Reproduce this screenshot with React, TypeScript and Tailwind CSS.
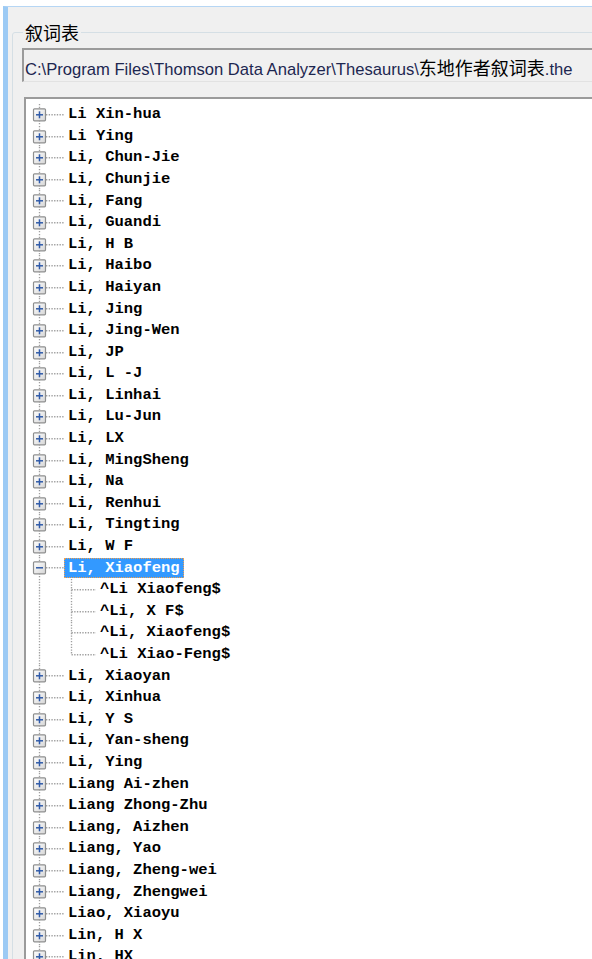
import React from "react";

type Node = { label: string; children?: string[]; selected?: boolean };

const ITEMS: Node[] = [
  { label: "Li Xin-hua" },
  { label: "Li Ying" },
  { label: "Li, Chun-Jie" },
  { label: "Li, Chunjie" },
  { label: "Li, Fang" },
  { label: "Li, Guandi" },
  { label: "Li, H B" },
  { label: "Li, Haibo" },
  { label: "Li, Haiyan" },
  { label: "Li, Jing" },
  { label: "Li, Jing-Wen" },
  { label: "Li, JP" },
  { label: "Li, L -J" },
  { label: "Li, Linhai" },
  { label: "Li, Lu-Jun" },
  { label: "Li, LX" },
  { label: "Li, MingSheng" },
  { label: "Li, Na" },
  { label: "Li, Renhui" },
  { label: "Li, Tingting" },
  { label: "Li, W F" },
  {
    label: "Li, Xiaofeng",
    selected: true,
    children: ["^Li Xiaofeng$", "^Li, X F$", "^Li, Xiaofeng$", "^Li Xiao-Feng$"],
  },
  { label: "Li, Xiaoyan" },
  { label: "Li, Xinhua" },
  { label: "Li, Y S" },
  { label: "Li, Yan-sheng" },
  { label: "Li, Ying" },
  { label: "Liang Ai-zhen" },
  { label: "Liang Zhong-Zhu" },
  { label: "Liang, Aizhen" },
  { label: "Liang, Yao" },
  { label: "Liang, Zheng-wei" },
  { label: "Liang, Zhengwei" },
  { label: "Liao, Xiaoyu" },
  { label: "Lin, H X" },
  { label: "Lin, HX" },
  { label: "Lin, Jian" },
];

const ROW_H = 21.6;
const MID = ROW_H / 2;
const DOTS = "1.35 1.35";
const LINE = "#a0a0a0";

// Expander cell: dotted tree lines plus the +/- box
function Expander({ open, hasBox, last }: { open?: boolean; hasBox: boolean; last?: boolean }) {
  return (
    <svg width={38} height={ROW_H} viewBox={`0 0 38 ${ROW_H}`} className="shrink-0">
      <defs>
        <linearGradient id="boxfill" x1="0" y1="0" x2="1" y2="1">
          <stop offset="0" stopColor="#ffffff" />
          <stop offset="1" stopColor="#d6d6d6" />
        </linearGradient>
      </defs>
      <line x1={13.5} y1={0} x2={13.5} y2={last ? MID : ROW_H} stroke={LINE} strokeWidth={1.35} strokeDasharray={DOTS} />
      <line x1={hasBox ? 20 : 13.5} y1={MID} x2={38} y2={MID} stroke={LINE} strokeWidth={1.35} strokeDasharray={DOTS} />
      {hasBox && (
        <g>
          <rect x={7.5} y={MID - 6} width={12} height={12} rx={1} fill="url(#boxfill)" stroke="#8e8f8f" strokeWidth={1.2} />
          <line x1={10} y1={MID} x2={17} y2={MID} stroke="#2f5aa8" strokeWidth={1.5} />
          {!open && <line x1={13.5} y1={MID - 3.5} x2={13.5} y2={MID + 3.5} stroke="#2f5aa8" strokeWidth={1.5} />}
        </g>
      )}
    </svg>
  );
}

function RootLine() {
  return (
    <svg width={32} height={ROW_H} viewBox={`0 0 32 ${ROW_H}`} className="shrink-0">
      <line x1={13.5} y1={0} x2={13.5} y2={ROW_H} stroke={LINE} strokeWidth={1.35} strokeDasharray={DOTS} />
    </svg>
  );
}

function Label({ text, selected }: { text: string; selected?: boolean }) {
  return (
    <span
      className={`flex h-[20px] items-center whitespace-pre px-[3px] ${
        selected ? "border border-dotted border-[#f2a04e] bg-[#3399ff] text-white" : "border border-transparent text-black"
      }`}
    >
      {text}
    </span>
  );
}

export default function App() {
  return (
    <div className="h-[959px] w-[592px] overflow-hidden bg-white pl-[3px] pt-[6px]">
      <div className="h-[1000px] w-[700px] border-l-[5px] border-t border-l-[#9ccaf4] border-t-[#b6d6f4] bg-[#f0f0f0] pl-[4px]">
        <fieldset className="mt-[14px] rounded-[3px] border border-[#d5dfe5] px-[9px]">
          <legend className="ml-[1px] px-[2px] font-['Noto_Sans_CJK_SC',sans-serif] text-[18px] leading-[22px] text-black">
            叙词表
          </legend>

          {/* read-only path field */}
          <div className="mt-[5px] flex h-[34px] items-center border-l-2 border-t-2 border-b border-l-[#9b9b9b] border-t-[#9b9b9b] border-b-[#e2e2e2] bg-[#f0f0f0] pl-[1px] pt-[5px] font-['Liberation_Sans','Noto_Sans_CJK_SC',sans-serif] text-[16.6px] text-[#1d2750]">
            <span className="whitespace-pre">
              C:\Program Files\Thomson Data Analyzer\Thesaurus\
              <span className="font-['Noto_Sans_CJK_SC',sans-serif] text-[18px] text-black">东地作者叙词表</span>
              .the
            </span>
          </div>

          {/* thesaurus tree */}
          <div className="ml-[2px] mt-[15px] h-[900px] border-l-2 border-t-2 border-l-[#9b9b9b] border-t-[#9b9b9b] bg-white pt-[5px] font-['Liberation_Mono',monospace] text-[15.5px] font-bold">
            {ITEMS.map((item) => (
              <div key={item.label}>
                <div className="flex h-[21.6px] items-center">
                  <Expander hasBox open={!!item.children} />
                  <Label text={item.label} selected={item.selected} />
                </div>
                {item.children?.map((c, i) => (
                  <div key={c} className="flex h-[21.6px] items-center">
                    <RootLine />
                    <Expander hasBox={false} last={i === item.children!.length - 1} />
                    <Label text={c} />
                  </div>
                ))}
              </div>
            ))}
          </div>
        </fieldset>
      </div>
    </div>
  );
}
